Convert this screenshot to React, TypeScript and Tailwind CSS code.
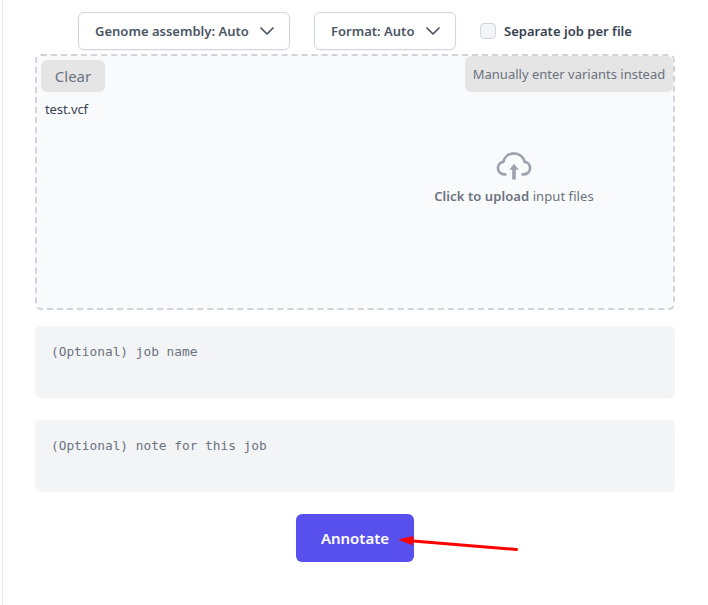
import React from "react";

const sans = "font-['Noto_Sans',sans-serif]";

function Chevron() {
  return (
    <svg width="14" height="8" viewBox="0 0 14 8" fill="none" stroke="#4b5563" strokeWidth="1.7" strokeLinecap="round" strokeLinejoin="round">
      <path d="M1 1l6 6 6-6" />
    </svg>
  );
}

function Dropdown({ label, className }: { label: string; className: string }) {
  return (
    <button className={`flex h-[38px] shrink-0 items-center justify-between rounded-md border border-gray-300 bg-white pr-[15px] pl-4 text-[#4b5563] shadow-xs ${className}`}>
      <span className="pt-px text-[13px] font-semibold tracking-[0.01px] whitespace-nowrap">{label}</span>
      <Chevron />
    </button>
  );
}

function CloudUpload() {
  return (
    <svg width="36" height="30" viewBox="0 0 36 30" fill="none" className="text-[#9ca3af]">
      <path d="M10.4 24.3H8.2C4.7 24.3 1.9 21.6 1.9 18.1c0-3.3 2.3-5.8 5.4-6.2C8.6 6.9 12.7 3.3 18 3.3s9.4 3.6 10.7 8.6c3.1.4 5.4 2.9 5.4 6.2 0 3.5-2.8 6.2-6.3 6.2h-2.2" stroke="currentColor" strokeWidth="2.7" />
      <path d="M18 13.8l4.7 6h-2.9v9.8h-3.6v-9.8h-2.9z" fill="currentColor" />
    </svg>
  );
}

export default function App() {
  return (
    <div className={`relative h-[605px] w-[708px] overflow-hidden bg-white pl-[2px] ${sans}`}>
      <main className="flex h-full flex-col border-l border-gray-200 pl-8">
        <div className="flex h-[54px] items-center pt-2 pl-[43px]">
          <Dropdown label="Genome assembly: Auto" className="w-[212px]" />
          <Dropdown label="Format: Auto" className="ml-6 w-[142px]" />
          <label className="ml-6 flex items-center gap-2 text-[13px] font-semibold text-[#374151]">
            <input type="checkbox" className="size-4 appearance-none rounded-sm border border-gray-300 bg-gray-100" />
            <span className="pt-px tracking-[0.02px] whitespace-nowrap">Separate job per file</span>
          </label>
        </div>
        <section className="flex h-64 w-[640px] justify-between rounded-md border-2 border-dashed border-[#d1d5db] bg-[#f9fafb]">
          <div className="pt-1 pl-1">
            <button className="h-8 w-16 rounded-md bg-[#e5e5e5] text-[15px] text-[#6b7280]">Clear</button>
            <p className="mt-[7px] ml-1 text-[13px] leading-5 tracking-[-0.1px] text-[#374151]">test.vcf</p>
          </div>
          <div className="flex w-[318px] flex-col items-center">
            <button className="h-9 w-[208px] self-end rounded-md bg-[#e5e5e5] pt-px text-[13px] whitespace-nowrap text-[#6b7280]">Manually enter variants instead</button>
            <div className="mt-[58px] flex flex-col items-center">
              <CloudUpload />
              <p className="mt-[6px] text-[13px] leading-5 tracking-[0.08px] whitespace-nowrap text-[#6b7280]">
                <span className="font-semibold">Click to upload</span> input files
              </p>
            </div>
          </div>
        </section>
        <textarea placeholder="(Optional) job name" className="mt-4 h-[72px] w-[640px] shrink-0 resize-none rounded-md bg-[#f3f4f6] p-4 font-['DejaVu_Sans_Mono',monospace] text-[12.8px] leading-5 placeholder:text-[#6b7280]" />
        <textarea placeholder="(Optional) note for this job" className="mt-[22px] h-[72px] w-[640px] shrink-0 resize-none rounded-md bg-[#f3f4f6] p-4 font-['DejaVu_Sans_Mono',monospace] text-[12.8px] leading-5 placeholder:text-[#6b7280]" />
        <button className="mt-[22px] ml-[261px] h-12 w-[118px] shrink-0 rounded-md bg-[#5850ec] text-[15px] font-semibold text-white">Annotate</button>
      </main>
      <svg className="pointer-events-none absolute top-[530px] left-[394px]" width="130" height="28" viewBox="0 0 130 28">
        <path d="M16 10.7L122.7 19.5" stroke="#ff0000" strokeWidth="2.9" strokeLinecap="round" />
        <path d="M4 9.5L19.5 6 18.5 15.3z" fill="#ff0000" />
      </svg>
    </div>
  );
}
